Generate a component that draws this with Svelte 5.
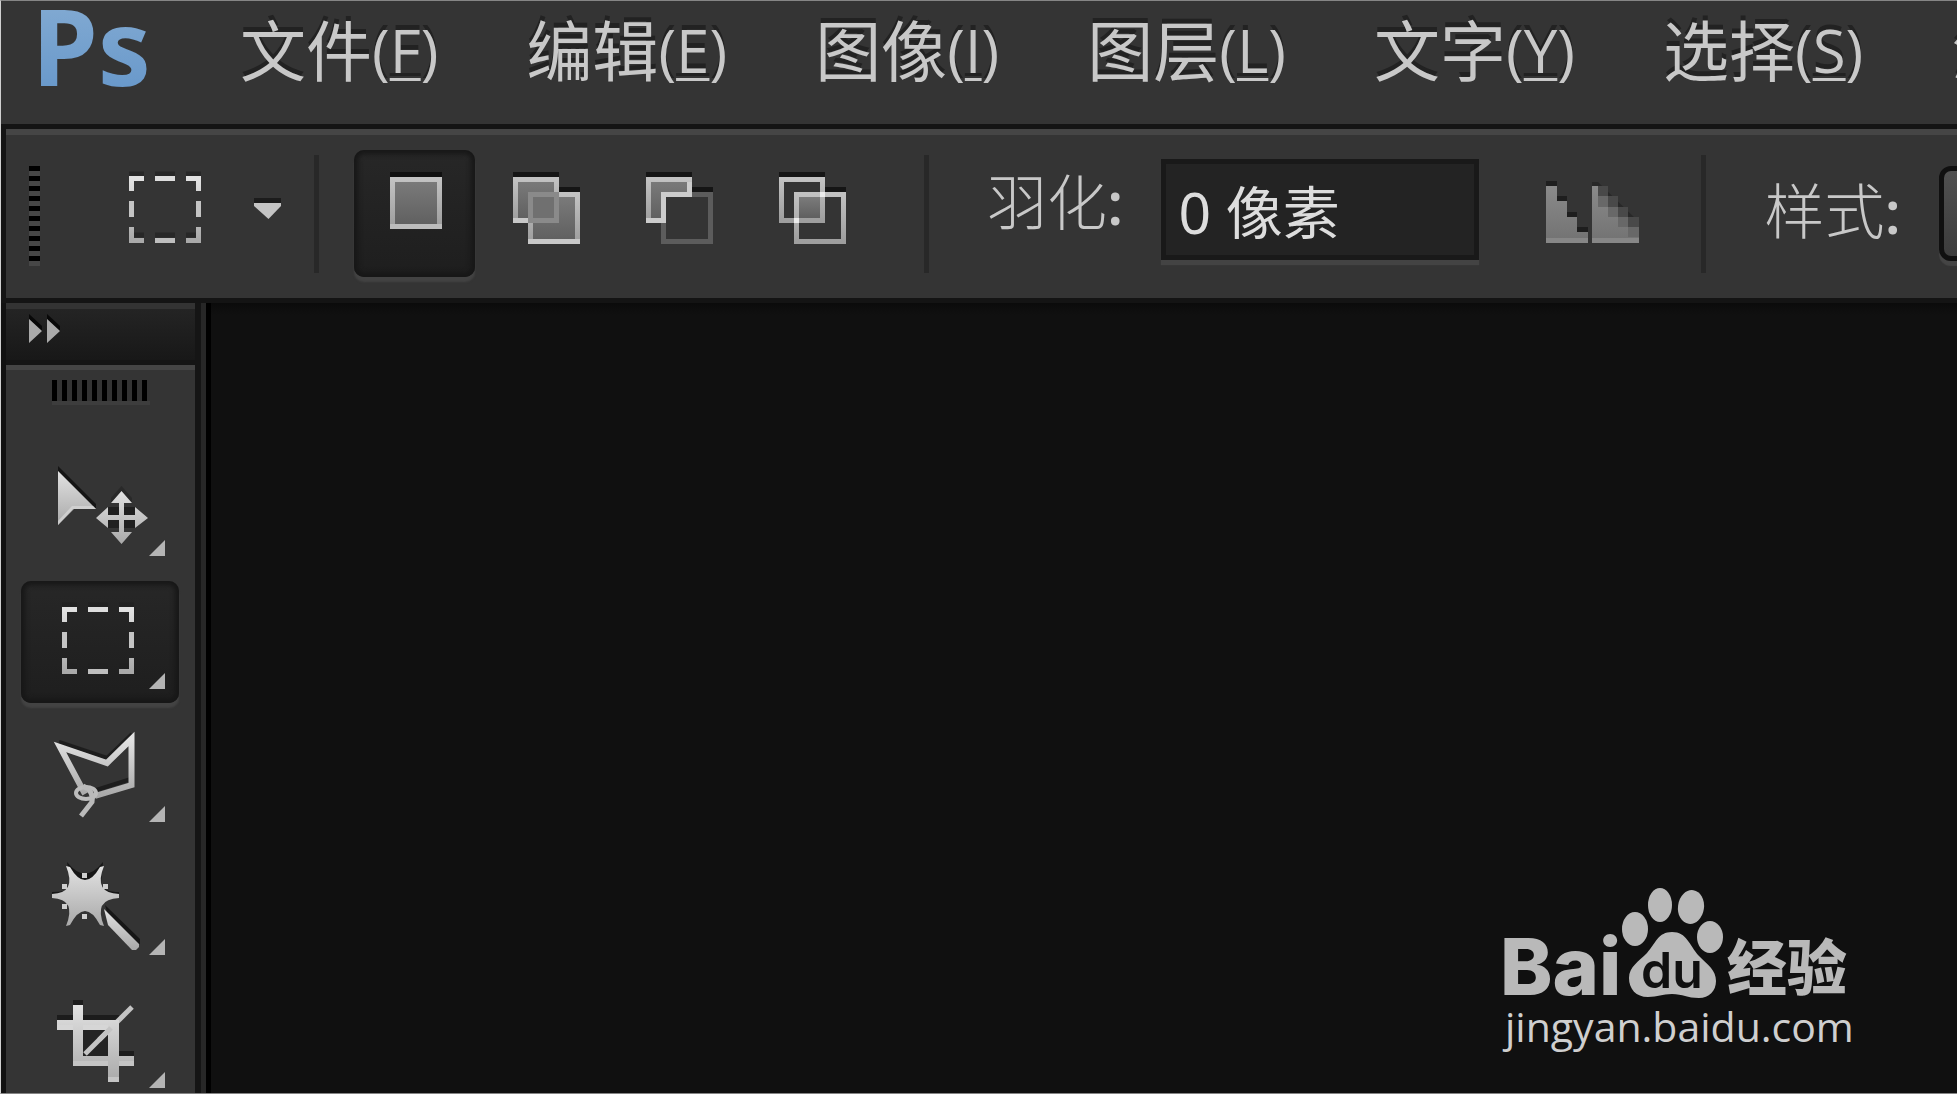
<script>
  const menus = [
    { name: '文件', key: 'F' },
    { name: '编辑', key: 'E' },
    { name: '图像', key: 'I' },
    { name: '图层', key: 'L' },
    { name: '文字', key: 'Y' },
    { name: '选择', key: 'S' },
    { name: '滤镜', key: 'T' }
  ];

  const modes = [
    { id: 'new', label: '新选区' },
    { id: 'add', label: '添加到选区' },
    { id: 'subtract', label: '从选区减去' },
    { id: 'intersect', label: '与选区交叉' }
  ];

  const tools = [
    { id: 'move', label: '移动工具' },
    { id: 'marquee', label: '矩形选框工具' },
    { id: 'lasso', label: '多边形套索工具' },
    { id: 'wand', label: '魔棒工具' },
    { id: 'crop', label: '裁剪工具' }
  ];

  let mode = $state('new');
  let tool = $state('marquee');
  let feather = $state('0 像素');
</script>

{#snippet marquee()}
  <g fill="none" stroke="#1f1f1f" stroke-width="5">
    <path d="M0 -2H15M26 -2H46M57 -2H72M5 59H15M26 59H46M57 59H67" opacity=".6" />
  </g>
  <g fill="none" stroke="url(#metal)" stroke-width="5">
    <path d="M2.5 15V2.5H15M57 2.5H69.5V15M69.5 51V64.5H57M15 64.5H2.5V51" />
  </g>
  <path d="M26 0H46V5H26z" fill="#dedede" />
  <path d="M26 62H46V67H26z" fill="#bebebe" />
  <path d="M0 25H5V41H0zM67 25H72V41H67z" fill="#c4c4c4" />
{/snippet}

<svg class="defs" aria-hidden="true">
  <defs>
    <linearGradient id="metal" x1="0" y1="0" x2="0" y2="1">
      <stop offset="0" stop-color="#e2e2e2" />
      <stop offset="1" stop-color="#a9a9a9" />
    </linearGradient>
    <linearGradient id="face" x1="0" y1="0" x2="0" y2="1">
      <stop offset="0" stop-color="#7b7b7b" />
      <stop offset="1" stop-color="#5f5f5f" />
    </linearGradient>
    <linearGradient id="edge" x1="0" y1="0" x2="0" y2="1">
      <stop offset="0" stop-color="#c2c2c2" />
      <stop offset="1" stop-color="#9e9e9e" />
    </linearGradient>
    <linearGradient id="soft" x1="0" y1="0" x2="0" y2="1">
      <stop offset="0" stop-color="#8a8a8a" />
      <stop offset="1" stop-color="#727272" />
    </linearGradient>
  </defs>
</svg>

<div class="app">
  <header class="menubar">
    <span class="logo">Ps</span>
    <nav class="menus">
      {#each menus as m}
        <button class="menu">{m.name}<span class="accel">(<u>{m.key}</u>)</span></button>
      {/each}
    </nav>
  </header>

  <div class="options">
    <div class="grip-v"></div>
    <button class="preset" aria-label="工具预设">
      <svg width="152" height="76" viewBox="0 -6 152 76">
        {@render marquee()}
        <path d="M125 22H152V27H125z" fill="#1c1c1c" />
        <path d="M125 27H152V30L139.500 43L125 30z" fill="#c4c4c4" />
      </svg>
    </button>
    <div class="sep"></div>
    <div class="modes">
      {#each modes as m}
        <button
          class="mode"
          class:active={mode === m.id}
          aria-label={m.label}
          aria-pressed={mode === m.id}
          onclick={() => (mode = m.id)}
        >
          <svg width="70" height="74" viewBox="0 -6 70 74">
            {#if m.id === 'new'}
              <path d="M10 -5H62V0H10z" fill="#101010" />
              <rect x="12.500" y="2.500" width="47" height="47" fill="url(#face)" stroke="url(#edge)" stroke-width="5" />
              <path d="M10 47H62V52H10z" fill="#bcbcbc" />
            {:else if m.id === 'add'}
              <path d="M0 -5H46V0H0zM46 10H67V15H46z" fill="#151515" />
              <rect x="2.500" y="2.500" width="41" height="41" fill="url(#face)" stroke="url(#edge)" stroke-width="5" />
              <path d="M0 41H15V46H0z" fill="#c8c8c8" />
              <rect x="17.500" y="17.500" width="47" height="47" fill="url(#face)" stroke="url(#edge)" stroke-width="5" />
              <path d="M15 15H46V46H15z" fill="#8a8a8a" />
              <path d="M20 20H41V41H20z" fill="#707070" />
              <path d="M15 62H67V67H15z" fill="#c8c8c8" />
            {:else if m.id === 'subtract'}
              <path d="M0 -5H46V0H0zM46 10H67V15H46z" fill="#151515" />
              <rect x="2.500" y="2.500" width="41" height="41" fill="url(#face)" stroke="url(#edge)" stroke-width="5" />
              <rect x="17.500" y="17.500" width="47" height="47" fill="#343434" stroke="#5c5c5c" stroke-width="5" />
              <path d="M46 17.500H17.500V46" fill="none" stroke="#cccccc" stroke-width="5" />
              <path d="M0 41H20V46H0zM41 5H46V20H41z" fill="#cccccc" />
            {:else}
              <path d="M0 -5H46V0H0zM46 10H67V15H46z" fill="#151515" />
              <path d="M20 20H41V41H20z" fill="url(#face)" />
              <rect x="2.500" y="2.500" width="41" height="41" fill="none" stroke="url(#edge)" stroke-width="5" />
              <rect x="17.500" y="17.500" width="47" height="47" fill="none" stroke="url(#edge)" stroke-width="5" />
              <path d="M41 15H46V20H41zM15 41H20V46H15z" fill="#ececec" />
            {/if}
          </svg>
        </button>
      {/each}
    </div>
    <div class="sep"></div>
    <label class="label" for="feather">羽化<b>:</b></label>
    <input id="feather" class="field" bind:value={feather} />
    <button class="alias" aria-label="消除锯齿">
      <svg width="94" height="68" viewBox="0 -6 94 68">
        <path d="M0 -5H11V0H0zM11 10H21V15H11zM21 26H31V31H21zM31 41H42V46H31z" fill="#1e1e1e" />
        <path d="M0 0H11V15H21V31H31V46H42V57H0z" fill="url(#soft)" />
        <path d="M46 -4H52L93 36V41H82V31H72V21H62V10H52V0H46z" fill="#282828" />
        <path d="M52 0H62V10H72V21H82V31H93V41H52z" fill="#494949" />
        <path d="M46 0H52V10H62V21H72V31H82V41H93V57H46z" fill="url(#soft)" />
        <path d="M52 10H62V21H52zM62 21H72V31H62zM72 31H82V41H72zM82 41H93V51H82z" fill="#686868" />
        <path d="M0 52H42V57H0zM46 52H93V57H46z" fill="#878787" />
      </svg>
    </button>
    <div class="sep"></div>
    <label class="label low" for="style">样式<b>:</b></label>
    <select id="style" class="style"><option value="normal">正常</option></select>
  </div>

  <main class="workspace">
    <aside class="panel">
      <button class="expand" aria-label="展开面板">
        <svg width="32" height="30" viewBox="0 -5 32 30">
          <path d="M0 -5L13 7V12L0 0zM18 -5L31 7V12L18 0z" fill="#080808" />
          <path d="M0 0L13 12L0 24zM18 0L31 12L18 24z" fill="#aaaaaa" />
        </svg>
      </button>
      <div class="tools">
        <div class="grip-h"></div>
        {#each tools as t}
          <button
            class="tool"
            class:active={tool === t.id}
            aria-label={t.label}
            aria-pressed={tool === t.id}
            onclick={() => (tool = t.id)}
          >
            <svg width="158" height="122" viewBox="0 0 158 122">
              {#if t.id === 'move'}
                <path d="M37 18L75 56V61L37 23z" fill="#151515" />
                <path d="M37 23L75 61H52L37 77z" fill="url(#metal)" />
                <path d="M51 58H72L75 61H53L37 77V73z" fill="#d8d8d8" opacity=".7" />
                <path d="M100.500 38L111 50V55H90V50z" fill="#292929" />
                <path d="M87 59H114V80H87z" fill="#202020" />
                <path d="M100.500 43L111 55H103V67H114V59L127 70L114 80V72H103V84H111L100.500 96L90 84H98V72H87V80L75 70L87 59V67H98V55H90z" fill="url(#metal)" />
              {:else if t.id === 'marquee'}
                <g transform="translate(41 26)">{@render marquee()}</g>
              {:else if t.id === 'lasso'}
                <path d="M38 28L86 44L111 20M72 77L110 65" fill="none" stroke="#1d1d1d" stroke-width="4" />
                <path d="M64 80L39 33L86 49L110.500 25V71L74 82" fill="none" stroke="url(#metal)" stroke-width="6" />
                <ellipse cx="65" cy="79" rx="10" ry="6" fill="none" stroke="#bdbdbd" stroke-width="4" />
                <path d="M62 72Q73 77 71 88L60 102" fill="none" stroke="#bababa" stroke-width="5" />
              {:else if t.id === 'wand'}
                <path d="M46 15Q64 38 82 15L80 37Q83 45 98 45V50H31V45Q46 45 50 40z" fill="#161616" />
                <path d="M84 58L119 92V97H114L88 72z" fill="#161616" />
                <path d="M45 19L49 20Q64 46 79 20L83 19Q72 46 98 47V51Q72 52 83 79L79 78Q64 50 49 78L45 79Q56 52 31 51V47Q56 46 45 19z" fill="url(#metal)" />
                <path d="M61 26H66V31H61zM41 37H46V42H41zM82 37H87V42H82zM41 57H46V62H41zM61 67H66V72H61z" fill="#cfcfcf" />
                <path d="M83 62L118 97V100L115 103H111L87 78z" fill="url(#metal)" />
              {:else}
                <g transform="translate(0 1)">
                  <path d="M52 19H62V24H52zM36 34H52V39H36zM62 34H98V39H62zM98 70H113V75H98zM62 70H87V75H62z" fill="#1c1c1c" />
                  <path d="M62 49H87V75H62z" fill="#242424" />
                  <path d="M64 73L111 26" stroke="#c4c4c4" stroke-width="5" />
                  <path d="M52 24H62V39H98V75H113V85H98V101H87V85H52V49H36V39H52zM62 49V75H87V49z" fill="url(#metal)" fill-rule="evenodd" />
                  <path d="M36 44H52V49H36zM62 44H87V49H62z" fill="#d6d6d6" />
                  <path d="M52 80H87V85H52zM98 80H113V85H98zM87 96H98V101H87z" fill="#c4c4c4" />
                  <path d="M78 59L90 47" stroke="#c4c4c4" stroke-width="5" />
                </g>
              {/if}
              <path d="M144 92V108H128z" fill="#b4b4b4" />
            </svg>
          </button>
        {/each}
      </div>
    </aside>
    <div class="canvas">
      <a class="mark" href="https://jingyan.baidu.com">
        <svg width="360" height="184" viewBox="1498 878 360 184" role="img" aria-label="Baidu 经验">
          <g fill="#b9b9b9">
            <ellipse cx="1635" cy="928" rx="13" ry="17" />
            <ellipse cx="1660" cy="904" rx="12" ry="17" />
            <ellipse cx="1691" cy="906" rx="13" ry="17" transform="rotate(8 1691 906)" />
            <ellipse cx="1710" cy="936" rx="13" ry="16" />
            <path d="M1672 931C1687 931 1689 944 1699 955C1708 964 1716 969 1716 980C1716 990 1709 997 1699 997C1687 997 1683 993 1672 993C1662 993 1658 996 1648 996C1636 996 1629 988 1629 977C1629 966 1639 960 1647 952C1656 942 1658 931 1672 931z" />
            <text class="bai" x="1500" y="994">Bai</text>
            <text class="exp" x="1727" y="989">经验</text>
          </g>
          <text class="du" x="1641" y="987">du</text>
          <text class="url" x="1505" y="1041">jingyan.baidu.com</text>
        </svg>
      </a>
    </div>
  </main>
</div>

<style>
  :global(body) {
    background: #101010;
    overflow: hidden;
  }
  .defs {
    position: absolute;
    width: 0;
    height: 0;
  }
  .app {
    box-sizing: border-box;
    height: 100vh;
    display: flex;
    flex-direction: column;
    overflow: hidden;
    border: 1px solid #858585;
    border-left-color: #d0d0d0;
    border-right: 0;
    background: #343434;
    color: #c8c8c8;
    font-family: 'Noto Sans', 'Noto Sans CJK SC', sans-serif;
  }
  button {
    padding: 0;
    border: 0;
    background: none;
    color: inherit;
    font: inherit;
    flex: none;
  }
  svg {
    display: block;
  }
  .menubar {
    display: flex;
    flex: none;
    height: 123px;
    padding-left: 31px;
    box-sizing: border-box;
    white-space: nowrap;
  }
  .logo {
    width: 208px;
    flex: none;
    font-size: 106px;
    font-weight: 700;
    line-height: 88px;
    background: linear-gradient(#82aad2, #5f92c8);
    background-clip: text;
    color: transparent;
  }
  .menus {
    display: flex;
    gap: 88px;
    align-items: flex-start;
  }
  .menu {
    font-family: 'Noto Sans CJK SC', sans-serif;
    font-size: 66px;
    line-height: 92px;
    text-shadow: 0 -5px 0 #222222;
  }
  .accel {
    font-family: 'Open Sans', sans-serif;
    font-size: 60px;
    line-height: 60px;
    vertical-align: 3px;
  }
  .accel u {
    text-decoration-thickness: 3px;
    text-underline-offset: 5px;
    text-decoration-skip-ink: none;
  }
  .options {
    display: flex;
    flex: none;
    align-items: center;
    box-sizing: border-box;
    height: 174px;
    padding-left: 23px;
    border-top: 5px solid #141414;
    border-left: 5px solid #141414;
    box-shadow: inset 0 6px 0 #454545;
  }
  .grip-v {
    flex: none;
    width: 11px;
    height: 100px;
    margin: 4px 89px 0 0;
    background: repeating-linear-gradient(#000000 0 5px, #474747 5px 10px);
  }
  .preset {
    margin: 0 33px 12px 0;
  }
  .sep {
    flex: none;
    width: 5px;
    height: 118px;
    background: #282828;
  }
  .modes {
    display: flex;
    gap: 12px;
    margin: 0 50px 0 35px;
  }
  .mode {
    display: flex;
    justify-content: center;
    align-items: center;
    width: 121px;
    height: 127px;
    border-radius: 10px;
  }
  .mode svg {
    margin-bottom: 12px;
  }
  .mode.active,
  .tool.active {
    background: linear-gradient(#272727, #1e1e1e);
    box-shadow:
      inset 0 0 5px 4px #171717,
      0 5px 2px #434343;
  }
  .label {
    flex: none;
    margin: 0 38px 26px 58px;
    font-family: 'Noto Sans CJK SC', sans-serif;
    font-size: 60px;
    font-weight: 300;
    line-height: 80px;
  }
  .label b {
    font-family: 'Open Sans', sans-serif;
    font-weight: 600;
  }
  .label.low {
    margin-bottom: 8px;
  }
  .field {
    flex: none;
    box-sizing: border-box;
    width: 318px;
    height: 101px;
    margin-bottom: 8px;
    padding: 0 12px;
    border: 5px solid #191919;
    background: #232323;
    box-shadow: 0 5px 1px #434343;
    color: #dddddd;
    font-family: 'Noto Sans', 'Noto Sans CJK SC', sans-serif;
    font-size: 57px;
    outline: 0;
  }
  .alias {
    margin: 0 61px 0 67px;
  }
  .style {
    flex: none;
    appearance: none;
    width: 320px;
    height: 95px;
    padding-left: 30px;
    border: 5px solid #101010;
    border-radius: 12px;
    background: linear-gradient(#505050, #3c3c3c);
    box-shadow: 0 5px 1px #454545;
    color: #dddddd;
    font-family: 'Noto Sans CJK SC', sans-serif;
    font-size: 57px;
  }
  .workspace {
    display: flex;
    flex: 1;
    min-height: 0;
    border-top: 5px solid #141414;
  }
  .panel {
    display: flex;
    flex-direction: column;
    flex: none;
    width: 189px;
    overflow: hidden;
    border-left: 5px solid #111111;
    border-right: 6px solid #151515;
  }
  .expand {
    display: flex;
    align-items: flex-start;
    height: 62px;
    padding: 5px 0 0 23px;
    box-sizing: border-box;
    border-top: 6px solid #333333;
    border-bottom: 5px solid #151515;
    background: linear-gradient(#242424, #181818);
  }
  .tools {
    display: flex;
    flex-direction: column;
    flex: 1;
    min-height: 0;
    gap: 11px;
    padding-left: 15px;
    border-top: 5px solid #454545;
  }
  .grip-h {
    flex: none;
    width: 98px;
    height: 21px;
    margin: 10px 0 32px 31px;
    background: repeating-linear-gradient(90deg, #000000 0 5px, #343434 5px 10px);
    border-bottom: 4px solid #3d3d3d;
  }
  .tool {
    width: 158px;
    height: 122px;
    border-radius: 10px;
  }
  .canvas {
    position: relative;
    flex: 1;
    min-width: 0;
    border-left: 5px solid #000000;
    box-shadow: -5px 0 0 #272727;
    margin-left: 5px;
    background: linear-gradient(#0b0b0b, #101010 12px);
  }
  .mark {
    position: absolute;
    right: 99px;
    bottom: 30px;
  }
  .bai {
    font-family: Inter, sans-serif;
    font-size: 79px;
    font-weight: 800;
  }
  .exp {
    font-family: 'Noto Sans CJK SC', sans-serif;
    font-size: 60px;
    font-weight: 900;
  }
  .du {
    fill: #101010;
    font-family: Inter, sans-serif;
    font-size: 50px;
    font-weight: 600;
  }
  .url {
    fill: #cfcfcf;
    font-family: 'Open Sans', sans-serif;
    font-size: 41px;
    font-weight: 500;
  }
</style>
